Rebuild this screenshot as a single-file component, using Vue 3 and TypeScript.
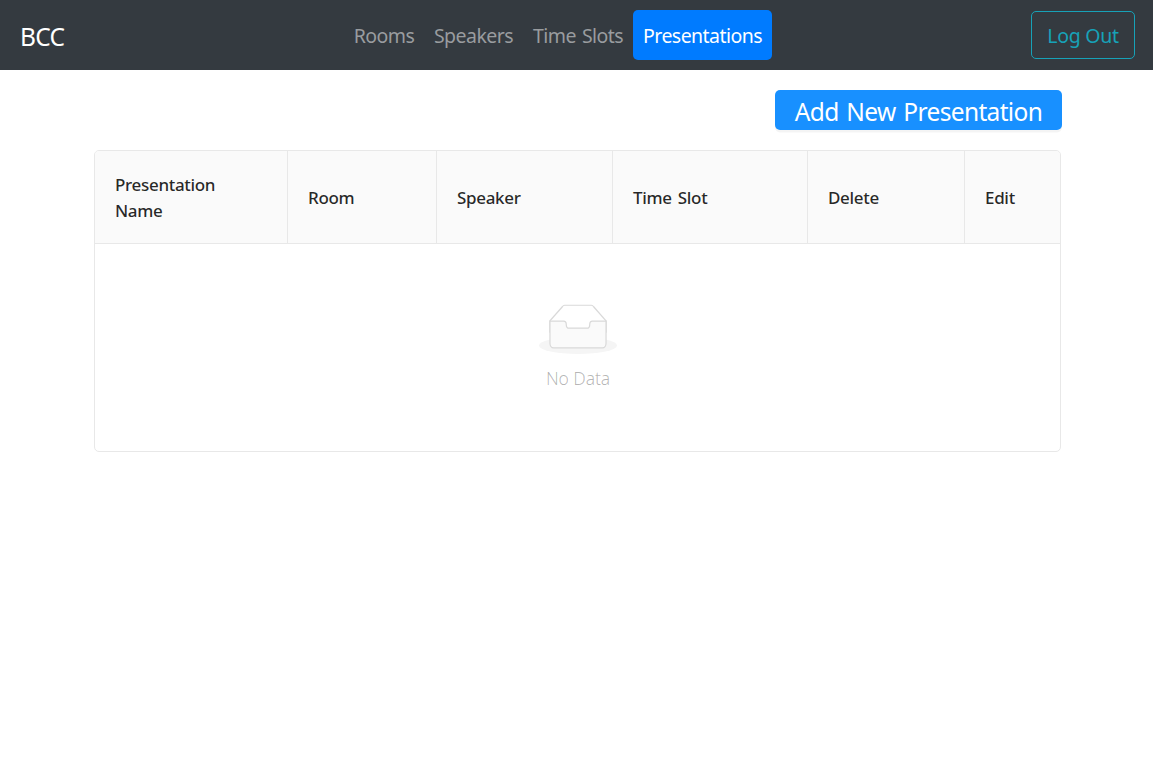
<script setup lang="ts">
interface NavItem {
  label: string
  width: number
  active?: boolean
}

const navItems: NavItem[] = [
  { label: 'Rooms', width: 80 },
  { label: 'Speakers', width: 99 },
  { label: 'Time Slots', width: 110 },
  { label: 'Presentations', width: 139, active: true },
]

const columns: { title: string; width: number }[] = [
  { title: 'Presentation Name', width: 193 },
  { title: 'Room', width: 149 },
  { title: 'Speaker', width: 176 },
  { title: 'Time Slot', width: 195 },
  { title: 'Delete', width: 157 },
  { title: 'Edit', width: 95 },
]
</script>

<template>
  <div class="page">
    <header class="navbar">
      <a class="brand">BCC</a>
      <nav class="nav">
        <a
          v-for="item in navItems"
          :key="item.label"
          class="nav-link"
          :class="{ active: item.active }"
          :style="{ width: item.width + 'px' }"
        >{{ item.label }}</a>
      </nav>
      <button class="logout" type="button">Log Out</button>
    </header>

    <main class="content">
      <button class="add" type="button">Add New Presentation</button>
      <table class="table">
        <colgroup>
          <col v-for="c in columns" :key="c.title" :style="{ width: c.width + 'px' }" />
        </colgroup>
        <thead>
          <tr>
            <th v-for="c in columns" :key="c.title">{{ c.title }}</th>
          </tr>
        </thead>
        <tbody>
          <tr>
            <td :colspan="columns.length">
              <div class="empty">
                <svg class="empty-icon" width="78" height="50" viewBox="0 0 64 41">
                  <g transform="translate(0 1)" fill="none" fill-rule="evenodd">
                    <ellipse fill="#f5f5f5" cx="32" cy="33" rx="32" ry="7" />
                    <g fill-rule="nonzero" stroke="#d9d9d9">
                      <path d="M55 12.76L44.854 1.258C44.367.474 43.656 0 42.907 0H21.093c-.749 0-1.46.474-1.947 1.257L9 12.761V22h46v-9.24z" />
                      <path
                        d="M41.613 15.931c0-1.605.994-2.93 2.227-2.931H55v18.137C55 33.26 53.68 35 52.05 35h-40.1C10.32 35 9 33.259 9 31.137V13h11.16c1.233 0 2.227 1.323 2.227 2.928v.022c0 1.605 1.005 2.901 2.237 2.901h14.752c1.232 0 2.237-1.308 2.237-2.913v-.007z"
                        fill="#fafafa"
                      />
                    </g>
                  </g>
                </svg>
                <p class="empty-text">No Data</p>
              </div>
            </td>
          </tr>
        </tbody>
      </table>
    </main>
  </div>
</template>

<style>
body {
  background: #fff;
}
</style>

<style scoped>
.page {
  box-sizing: border-box;
  min-height: 769px;
  font-family: 'Segoe UI', 'Noto Sans', 'Open Sans', sans-serif;
}

.navbar {
  box-sizing: border-box;
  display: flex;
  align-items: center;
  height: 70px;
  padding: 0 18px 0 20px;
  background: #343a40;
}

.brand {
  width: 324px;
  color: #fff;
  font-size: 24.5px;
  line-height: 38px;
  letter-spacing: -0.7px;
  padding-top: 4px;
  box-sizing: border-box;
}

.nav {
  display: flex;
  margin-right: auto;
  margin-left: -0.5px;
}

.nav-link {
  box-sizing: border-box;
  height: 50px;
  padding: 1px 0 0 1px;
  border-radius: 5px;
  color: #999c9f;
  font-size: 19.5px;
  line-height: 50px;
  letter-spacing: -0.55px;
  word-spacing: 1.5px;
  text-align: center;
  white-space: nowrap;
}

.nav-link.active {
  background: #007bff;
  color: #fff;
}

.logout {
  box-sizing: border-box;
  width: 104px;
  height: 48px;
  padding: 0;
  border: 1px solid #17a2b8;
  border-radius: 5px;
  background: transparent;
  color: #17a2b8;
  font-family: inherit;
  font-size: 19.5px;
  letter-spacing: -0.25px;
  white-space: nowrap;
}

.content {
  display: flex;
  flex-direction: column;
  width: 967px;
  margin-left: 94px;
  padding-top: 20px;
}

.add {
  align-self: flex-end;
  width: 287px;
  height: 40px;
  margin-right: -1px;
  padding: 3px 0 0;
  border: 0;
  border-radius: 5px;
  background: #1890ff;
  box-shadow: 0 2.5px 0 rgba(0, 0, 0, 0.045);
  color: #fff;
  font-family: inherit;
  font-size: 24.5px;
  line-height: 37px;
  letter-spacing: -0.65px;
  word-spacing: 2px;
  white-space: nowrap;
}

.table {
  box-sizing: border-box;
  width: 967px;
  height: 302px;
  margin-top: 20px;
  border: 1px solid #e8e8e8;
  border-radius: 5px;
  border-collapse: separate;
  border-spacing: 0;
  table-layout: fixed;
}

th {
  box-sizing: border-box;
  height: 93px;
  padding: 1.5px 20px 0;
  border-right: 1px solid #e8e8e8;
  border-bottom: 1px solid #e8e8e8;
  background: #fafafa;
  color: rgba(0, 0, 0, 0.85);
  font-size: 17px;
  font-weight: 500;
  line-height: 26px;
  letter-spacing: -0.32px;
  word-spacing: 2px;
  text-align: left;
}

th:first-child {
  border-top-left-radius: 4px;
}

th:last-child {
  border-right: 0;
  border-top-right-radius: 4px;
}

td {
  padding: 0;
  vertical-align: top;
}

.empty {
  display: flex;
  flex-direction: column;
  align-items: center;
  padding: 59.5px 0 0 1px;
}

.empty-icon {
  display: block;
}

.empty-text {
  margin: 11.5px 0 0;
  color: rgba(0, 0, 0, 0.3);
  font-size: 17.5px;
  font-weight: 300;
  line-height: 26px;
  letter-spacing: -0.1px;
}
</style>
